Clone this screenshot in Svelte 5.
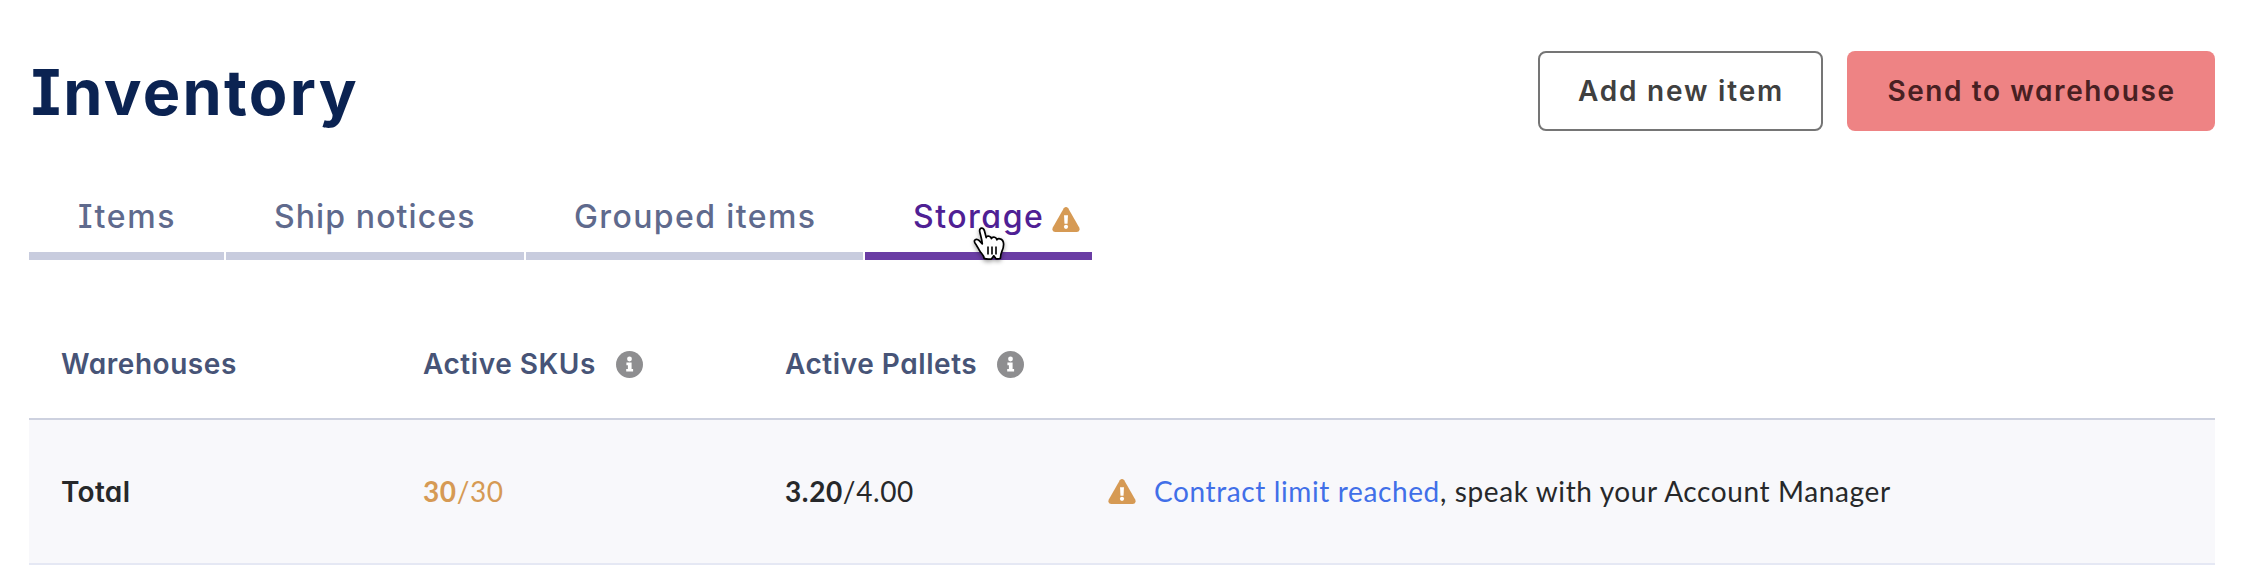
<script lang="ts">
    type Tab = {
        label: string;
        tracking: number;
        warning?: boolean;
    };

    const tabs: Tab[] = [
        { label: 'Items', tracking: 1.6 },
        { label: 'Ship notices', tracking: 1.1 },
        { label: 'Grouped items', tracking: 1.4 },
        { label: 'Storage', tracking: 1.5, warning: true }
    ];

    const columns = [
        { label: 'Warehouses', info: false },
        { label: 'Active SKUs', info: true },
        { label: 'Active Pallets', info: true }
    ];

    let active = $state('Storage');
</script>

{#snippet warningIcon()}
    <svg class="warning" viewBox="0 0 28 25" aria-hidden="true">
        <path fill="#d69a54" d="M11.8 1.3Q14-1.3 16.2 1.3L27.2 20.6Q28.6 24.5 25 25H3Q-.6 24.5.8 20.6Z" />
        <path fill="#fff" d="M12 8.2h4l-.5 8.6h-3z" />
        <circle cx="14" cy="19.8" r="2.1" fill="#fff" />
    </svg>
{/snippet}

{#snippet infoIcon()}
    <svg class="info" viewBox="0 0 27 27" aria-hidden="true">
        <circle cx="13.5" cy="13.5" r="13.5" fill="#8e8e90" />
        <circle cx="13.5" cy="8" r="2.4" fill="#fff" />
        <path fill="#fff" d="M10.4 11.6h5.2v6.3h1.5v2.7h-6.9v-2.7h1.7v-3.6h-1.5z" />
    </svg>
{/snippet}

<main class="inventory">
    <header class="page-header">
        <h1>Inventory</h1>
        <div class="actions">
            <button class="btn">Add new item</button>
            <button class="btn btn-primary">Send to warehouse</button>
        </div>
    </header>

    <nav class="tabs">
        {#each tabs as tab}
            <button class="tab" class:active={tab.label === active} onclick={() => (active = tab.label)}>
                <span style:letter-spacing="{tab.tracking}px">{tab.label}</span>
                {#if tab.warning}
                    {@render warningIcon()}
                    <svg class="pointer" viewBox="0 0 32 34" aria-hidden="true">
                        <path
                            fill="#fff"
                            stroke="#000"
                            stroke-width="1.7"
                            stroke-linejoin="round"
                            d="M11.2 31.4C10.9 28.6 9.3 27.2 7.6 25.2C5.8 23 4.9 20.3 3.4 18.2C2 16.2.9 14.9 1.5 13.6C2.3 11.9 4.7 12.2 6.2 13.6L9.3 16.8C8.9 12.2 7.5 8.2 6.8 5C6.3 2.8 7 1.3 8.4 1.1C10 .9 11 2 11.5 4L13.2 10.6C13.4 9.3 14.8 8.8 16.2 9.2C17.6 9.6 18.2 10.4 18.4 11.6C19 10.2 20.4 9.9 21.7 10.3C23 10.7 23.7 11.4 23.9 12.8C24.7 11.7 26 11.5 27.1 11.9C29.2 12.6 30.5 14.3 30.6 17C30.7 20 29.8 22.5 28.8 24.6C27.8 26.8 27.5 28.7 27.4 31.2C26 31.8 24.2 31.9 22.8 31.6L20.8 28.8L18.6 31.8C16.2 32.3 13.5 32.3 11.2 31.4Z"
                        />
                        <path stroke="#000" stroke-width="1.6" d="M15 19.4v8M19 19.4v8M23 19.4v8" />
                    </svg>
                {/if}
            </button>
        {/each}
    </nav>

    <section class="table">
        <div class="row head">
            {#each columns as column}
                <div class="cell">
                    <span>{column.label}</span>
                    {#if column.info}
                        {@render infoIcon()}
                    {/if}
                </div>
            {/each}
        </div>
        <div class="row total">
            <div class="cell name">Total</div>
            <div class="cell value limit"><b>30</b>/30</div>
            <div class="cell value"><b>3.20</b>/4.00</div>
            <div class="cell message">
                {@render warningIcon()}
                <span class="value"><a href="#contract">Contract limit reached</a>, speak with your Account Manager</span>
            </div>
        </div>
    </section>
</main>

<style>
    :global(body) {
        background: #fff;
    }

    .inventory {
        padding: 51px 39px 0 29px;
        font-family: Inter, sans-serif;
        font-feature-settings: 'cv08', 'cv11';
        color: #27282a;
    }

    .page-header {
        display: flex;
        align-items: center;
        justify-content: space-between;
        height: 80px;
    }

    h1 {
        margin: 2px 0 0 2px;
        font-size: 63px;
        font-weight: 650;
        line-height: 80px;
        letter-spacing: 2.3px;
        color: #0b2352;
    }

    .actions {
        display: flex;
        gap: 24px;
    }

    button {
        padding: 0;
        border: none;
        background: none;
        font: inherit;
        font-feature-settings: inherit;
        cursor: pointer;
    }

    .btn {
        box-sizing: border-box;
        width: 285px;
        height: 80px;
        padding-left: 1px;
        border: 2px solid #757575;
        border-radius: 8px;
        font-size: 28px;
        font-weight: 600;
        letter-spacing: 1.8px;
        color: #404040;
    }

    .btn-primary {
        width: 368px;
        border: none;
        background: #ee8384;
        letter-spacing: 1.6px;
        color: #482022;
    }

    .tabs {
        display: grid;
        grid-template-columns: 195px 298px 337px 227px;
        gap: 2px;
        margin-top: 49px;
    }

    .tab {
        position: relative;
        display: flex;
        align-items: center;
        box-sizing: border-box;
        height: 80px;
        padding: 0 0 0 48px;
        border-bottom: 8px solid #c8ccde;
        font-size: 32px;
        font-weight: 500;
        white-space: nowrap;
        color: #5f6a8d;
    }

    .tab:first-child {
        padding-left: 49px;
    }

    .tab.active {
        border-color: #6a3da4;
        color: #4f2094;
    }

    .warning {
        flex: none;
        width: 28px;
        height: 25px;
    }

    .tab .warning {
        margin: 7px 0 0 8px;
    }

    .pointer {
        position: absolute;
        left: 108px;
        top: 47px;
        width: 32px;
        height: 34px;
        overflow: visible;
        filter: drop-shadow(0 2px 2px rgba(0, 0, 0, 0.35));
    }

    .table {
        margin-top: 50px;
    }

    .row {
        display: grid;
        grid-template-columns: 362px 362px 323px 1fr;
        align-items: center;
        padding-left: 32px;
    }

    .cell {
        display: flex;
        align-items: center;
    }

    .head {
        height: 108px;
        font-size: 28px;
        font-weight: 600;
        letter-spacing: 0.55px;
        color: #475477;
    }

    .info {
        width: 27px;
        height: 27px;
        margin-left: 20px;
    }

    .total {
        height: 143px;
        border-top: 2px solid #cdd1df;
        border-bottom: 2px solid #e5e8f4;
        background: #f8f8fb;
        font-family: Lato, sans-serif;
        font-size: 28px;
        letter-spacing: 0.62px;
    }

    .name {
        font-family: Inter, sans-serif;
        font-size: 28px;
        font-weight: 600;
        letter-spacing: 0.3px;
    }

    .value {
        padding-bottom: 2px;
    }

    .limit {
        color: #d69a54;
    }

    .message {
        gap: 18px;
    }

    a {
        color: #416fe8;
        text-decoration: none;
    }
</style>
